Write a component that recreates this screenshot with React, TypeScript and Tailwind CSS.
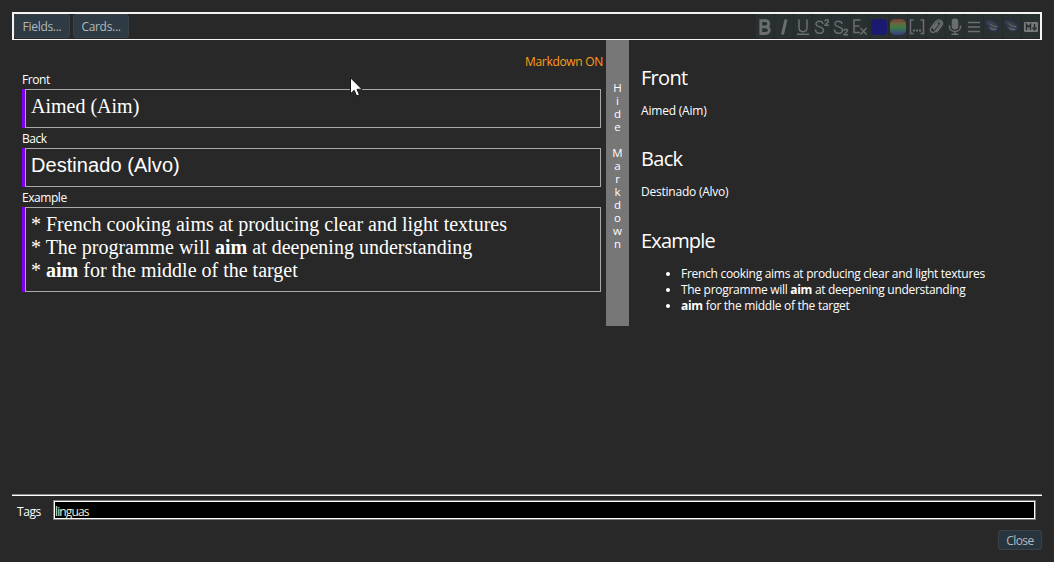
import type { ReactNode } from "react";

const ui = "font-['Open_Sans','Noto_Sans',sans-serif]";

function ToolCell({ children }: { children: ReactNode }) {
  return (
    <div className="flex h-6 w-[18px] items-center justify-center rounded-[2px] bg-[#283032]">
      <svg width="18" height="24" viewBox="0 -1 18 24" fill="none" stroke="#6b6d6e" strokeWidth="1.5">
        {children}
      </svg>
    </div>
  );
}

function Planet() {
  return (
    <ToolCell>
      <ellipse cx="8.200" cy="9.600" rx="6.800" ry="3" transform="rotate(26 8.200 9.600)" fill="#3a4042" stroke="#2c3568" strokeWidth="1" />
      <path d="M4 11c.7 3.800 3.500 5.500 6.500 5 2-.3 3-1.500 3.500-2.500Z" fill="#484c4d" stroke="#2c3568" strokeWidth=".8" />
      <path d="M5.500 8.500c2 2.300 4.500 3 7.500 3.300M6.500 13c1.500 1.200 3.500 1.600 5.500 1.200" stroke="#6f706c" strokeWidth="1" />
    </ToolCell>
  );
}

function Toolbar() {
  return (
    <div className="flex h-7 items-start border-2 border-b border-[#f4f4f4] pb-px">
      <button className="h-6 w-14 rounded-[3px] border border-[#3a434a] bg-[#2f3b44] pt-px text-[12px] leading-[21px] tracking-[-0.3px] text-[#b4b9bd]">Fields...</button>
      <button className="ml-[3px] h-6 w-14 rounded-[3px] border border-[#3a434a] bg-[#2f3b44] pt-px text-[12px] leading-[21px] tracking-[-0.3px] text-[#b4b9bd]">Cards...</button>
      <div className="ml-auto flex gap-px">
        <ToolCell>
          <path d="M4.800 5.700h4.500c4.500 0 4.500 6 .2 6.100 5 .2 5 6.700 0 6.700H4.800ZM4.800 11.800h4.700" strokeWidth="2.800" />
        </ToolCell>
        <ToolCell><path d="M11 4.500 7.500 19.500" strokeWidth="3" /></ToolCell>
        <ToolCell><path d="M5 4.500v8c0 5.500 8 5.500 8 0v-8M3 19.300h12" strokeWidth="1.500" /></ToolCell>
        <ToolCell>
          <path d="M10 9C9.500 5.200 2.800 5.500 3 9c.2 3.500 7.500 2.300 7.500 6.200 0 4.200-8 4.200-8-.7M12 6.500c0-2.500 3.500-2.300 3.500-.2C15.500 7.500 12 9 12 10.300h4" strokeWidth="1.500" />
        </ToolCell>
        <ToolCell>
          <path d="M10 9C9.500 5.200 2.800 5.500 3 9c.2 3.500 7.500 2.300 7.500 6.200 0 4.200-8 4.200-8-.7M12 16c0-2.500 3.500-2.300 3.500-.2 0 1.200-3.500 2.700-3.500 4h4" strokeWidth="1.500" />
        </ToolCell>
        <ToolCell><path d="M9.500 5H3v12.500h6M3 11h5.500M9.500 13l6 6.500M15.500 13l-6 6.500" strokeWidth="1.500" /></ToolCell>
        <ToolCell><rect x="1" y="4" width="16" height="16" rx="4" fill="#1c1a70" stroke="none" /></ToolCell>
        <ToolCell>
          <defs>
            <linearGradient id="spectrum" x1="0" y1="0" x2="0" y2="1">
              <stop offset="0" stopColor="#7a3c35" />
              <stop offset=".28" stopColor="#6a6540" />
              <stop offset=".52" stopColor="#3d7a42" />
              <stop offset=".75" stopColor="#3a6168" />
              <stop offset="1" stopColor="#39397a" />
            </linearGradient>
          </defs>
          <rect x="1" y="4" width="16" height="16" rx="5" fill="url(#spectrum)" stroke="none" />
        </ToolCell>
        <ToolCell>
          <path d="M5.500 5H2.500v13.500h3M12.500 5h3v13.500h-3" />
          <path d="M5 15.500h2m1 0h2m1 0h2" strokeWidth="2" />
        </ToolCell>
        <ToolCell>
          <path d="m5.500 13.500 5-6c1.800-2 4.500.2 2.800 2.300L8.500 16c-2.500 3.200-7 .2-4.500-3.200L9 6.500c3-3.700 8.500.3 5.500 4.300l-5 6.400M6.500 14.500 11 9" strokeWidth="1.400" />
        </ToolCell>
        <ToolCell>
          <rect x="5.700" y="3.500" width="6.600" height="11" rx="3.300" fill="#6b6d6e" stroke="none" />
          <path d="M3.500 10.500v1.200c0 6.300 11 6.300 11 0v-1.200M9 16v3M5.500 19.300h7" strokeWidth="1.500" />
        </ToolCell>
        <ToolCell><path d="M3 7.500h12M3 12h12M3 16.500h12" strokeWidth="1.500" /></ToolCell>
        <Planet />
        <Planet />
        <ToolCell>
          <rect x="2" y="7" width="14" height="10" rx="1" fill="#77797a" stroke="none" />
          <path d="M4.500 15V9.500l2 2.500 2-2.500V15M12.500 9v4M10.500 12.500l2 2.500 2-2.500" stroke="#252c2e" strokeWidth="1.400" />
        </ToolCell>
      </div>
    </div>
  );
}

function Field({ label, className, children }: { label: string; className: string; children: ReactNode }) {
  return (
    <div>
      <div className="h-5 pt-px text-[12px] leading-5 tracking-[-0.45px]">{label}</div>
      <div className={`border border-l-0 border-[#a9a9a9] ${className}`}>
        <div className="-my-px flex flex-1 border-l-[3px] border-[#7d00f5]">
          <div className="flex-1 border-l border-[#a9a9a9] pl-[5px] pt-[6px] text-[20px] leading-[23px]">{children}</div>
        </div>
      </div>
    </div>
  );
}

function Preview() {
  return (
    <div className="pl-3 pt-[26px] text-[12px] leading-4">
      <h2 className="h-6 text-[20px] leading-6 tracking-[-0.7px]">Front</h2>
      <p className="mt-[13px] tracking-[-0.2px]">Aimed (Aim)</p>
      <h2 className="mt-7 h-6 text-[20px] leading-6 tracking-[-0.7px]">Back</h2>
      <p className="mt-[13px] tracking-[-0.23px]">Destinado (Alvo)</p>
      <h2 className="mt-[29px] h-6 text-[20px] leading-6 tracking-[-0.85px]">Example</h2>
      <ul className="mt-[13px] list-disc pl-10 tracking-[-0.28px]">
        <li>French cooking aims at producing clear and light textures</li>
        <li className="tracking-[-0.3px]">The programme will <b>aim</b> at deepening understanding</li>
        <li><b>aim</b> for the middle of the target</li>
      </ul>
    </div>
  );
}

export default function App() {
  return (
    <div className={`relative flex h-[562px] w-[1054px] flex-col overflow-hidden bg-[#282828] px-3 pt-3 text-white ${ui}`}>
      <Toolbar />
      <div className="flex h-[454px] items-start">
        <div className="w-[594px] pl-[10px] pr-[5px]">
          <div className="-mr-[2px] h-[29px] pt-3 text-right text-[12px] leading-5 tracking-[-0.3px] text-[#ff9c1a]">Markdown ON</div>
          <Field label="Front" className="flex h-[39px]"><div className="font-['Liberation_Serif',serif]">Aimed (Aim)</div></Field>
          <Field label="Back" className="flex h-[39px]"><div className="font-['Liberation_Sans',sans-serif] tracking-[0.06px]">Destinado (Alvo)</div></Field>
          <Field label="Example" className="flex h-[85px]">
            <div className="font-['Liberation_Serif',serif]">
              <div>* French cooking aims at producing clear and light textures</div>
              <div>* The programme will <b>aim</b> at deepening understanding</div>
              <div>* <b>aim</b> for the middle of the target</div>
            </div>
          </Field>
        </div>
        <div className="flex h-[286px] w-[23px] flex-col items-center bg-[#777777] pt-[41px] text-[11.5px] leading-[13px]">
          {"Hide Markdown".split("").map((letter, i) => (
            <span key={i} className="h-[13px]">{letter}</span>
          ))}
        </div>
        <Preview />
      </div>
      <div className="h-[2px] border-t border-[#8a8a8a] bg-white" />
      <div className="mt-1 flex h-5 items-center pl-[5px] pr-[6px] text-[12px]">
        <span className="w-9 pt-[3px] tracking-[-0.4px]">Tags</span>
        <div className="h-5 flex-1 border border-[#7c7c7c]">
          <div className="h-[18px] border border-white bg-black pt-px leading-[17px] tracking-[-0.85px] text-[#f3f0cf]">linguas</div>
        </div>
      </div>
      <button className="ml-auto mt-[10px] h-5 w-11 rounded-[3px] border border-[#3a434a] bg-[#29353e] pt-px text-[12px] leading-[17px] tracking-[-0.6px] text-[#b4b9bd]">Close</button>
      <svg className="absolute left-[350px] top-[77px]" width="13" height="20" viewBox="0 0 13 20">
        <path d="M.5.800v16l3.700-3.500L6.600 19l2.800-1.200L7 12.300h5Z" fill="#fff" stroke="#15151c" />
      </svg>
    </div>
  );
}
